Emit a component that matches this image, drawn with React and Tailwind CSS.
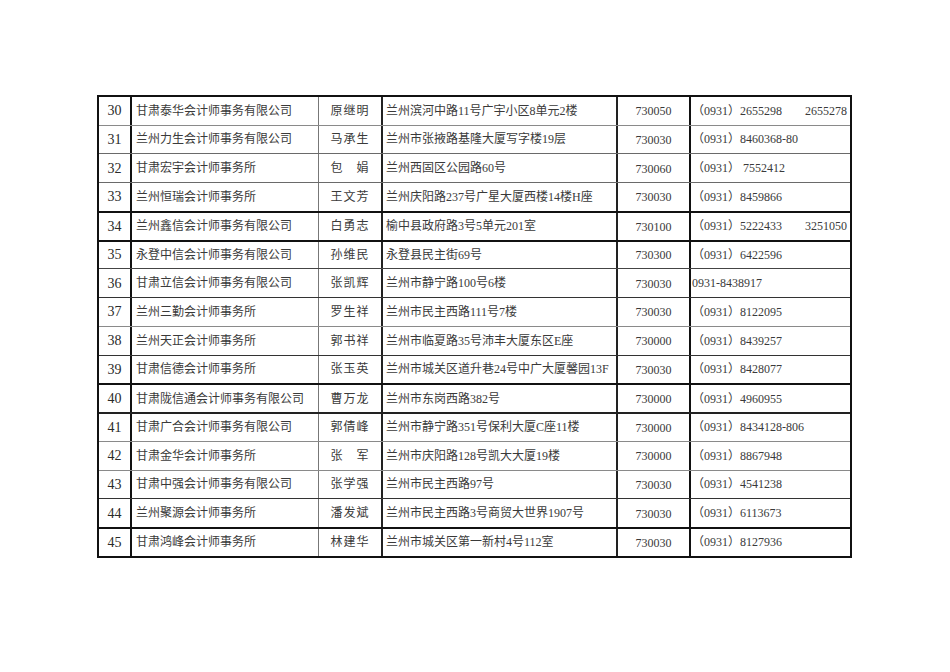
import React from "react";

const rows = [
  { n: "30", co: "甘肃泰华会计师事务有限公司", name: "原继明", addr: "兰州滨河中路11号广宇小区8单元2楼", pc: "730050", ph: "（0931）2655298", ph2: "2655278", b: "" },
  { n: "31", co: "兰州力生会计师事务有限公司", name: "马承生", addr: "兰州市张掖路基隆大厦写字楼19层", pc: "730030", ph: "（0931）8460368-80", b: "border-t border-[#8a8a8a]" },
  { n: "32", co: "甘肃宏宇会计师事务所", name: "包　娟", addr: "兰州西固区公园路60号", pc: "730060", ph: "（0931） 7552412", b: "border-t border-[#6a6a6a]" },
  { n: "33", co: "兰州恒瑞会计师事务所", name: "王文芳", addr: "兰州庆阳路237号广星大厦西楼14楼H座", pc: "730030", ph: "（0931）8459866", b: "border-t border-[#6a6a6a]" },
  { n: "34", co: "兰州鑫信会计师事务有限公司", name: "白勇志", addr: "榆中县政府路3号5单元201室", pc: "730100", ph: "（0931）5222433", ph2: "3251050", b: "border-t-2 border-[#111]" },
  { n: "35", co: "永登中信会计师事务有限公司", name: "孙维民", addr: "永登县民主街69号", pc: "730300", ph: "（0931）6422596", b: "border-t-2 border-[#111]" },
  { n: "36", co: "甘肃立信会计师事务有限公司", name: "张凯辉", addr: "兰州市静宁路100号6楼", pc: "730030", ph: "0931-8438917", b: "border-t border-[#444]" },
  { n: "37", co: "兰州三勤会计师事务所", name: "罗生祥", addr: "兰州市民主西路111号7楼", pc: "730030", ph: "（0931）8122095", b: "border-t border-[#333]" },
  { n: "38", co: "兰州天正会计师事务所", name: "郭书祥", addr: "兰州市临夏路35号沛丰大厦东区E座", pc: "730000", ph: "（0931）8439257", b: "border-t border-[#8a8a8a]" },
  { n: "39", co: "甘肃信德会计师事务所", name: "张玉英", addr: "兰州市城关区道升巷24号中广大厦馨园13F", pc: "730030", ph: "（0931）8428077", b: "border-t border-[#333]" },
  { n: "40", co: "甘肃陇信通会计师事务有限公司", name: "曹万龙", addr: "兰州市东岗西路382号", pc: "730000", ph: "（0931）4960955", b: "border-t-2 border-[#111]" },
  { n: "41", co: "甘肃广合会计师事务有限公司", name: "郭倩峰", addr: "兰州市静宁路351号保利大厦C座11楼", pc: "730000", ph: "（0931）8434128-806", b: "border-t-2 border-[#222]" },
  { n: "42", co: "甘肃金华会计师事务所", name: "张　军", addr: "兰州市庆阳路128号凯大大厦19楼", pc: "730000", ph: "（0931）8867948", b: "border-t border-[#8a8a8a]" },
  { n: "43", co: "甘肃中强会计师事务有限公司", name: "张学强", addr: "兰州市民主西路97号", pc: "730030", ph: "（0931）4541238", b: "border-t border-[#8a8a8a]" },
  { n: "44", co: "兰州聚源会计师事务所", name: "潘发斌", addr: "兰州市民主西路3号商贸大世界1907号", pc: "730030", ph: "（0931）6113673", b: "border-t border-[#333]" },
  { n: "45", co: "甘肃鸿峰会计师事务所", name: "林建华", addr: "兰州市城关区第一新村4号112室", pc: "730030", ph: "（0931）8127936", b: "border-t-2 border-[#111]" },
];

const font = { fontFamily: '"Liberation Serif", "Noto Sans CJK SC", serif' };

export default function App() {
  return (
    <div className="min-h-screen w-[950px] bg-white pt-[95px] pl-[97px]" style={font}>
      <div className="w-[755px] border-2 border-[#111] text-[12px] leading-none text-[#3a3a3a]">
        {rows.map((r, i) => (
          <div
            key={r.n}
            className={`flex ${i === 0 ? "h-[27.5px]" : "h-[28.75px]"} ${r.b}`}
          >
            <div className="flex w-[31px] shrink-0 items-center justify-center pt-[1px] text-[14px] text-[#2a2a2a]">
              {r.n}
            </div>
            <div className="flex w-[188px] shrink-0 items-center border-l-2 border-[#111] pl-[4px] whitespace-nowrap">
              {r.co}
            </div>
            <div className="flex w-[63px] shrink-0 items-center justify-center border-l border-[#777] tracking-[1px] whitespace-nowrap">
              {r.name}
            </div>
            <div className="flex w-[235px] shrink-0 items-center border-l-2 border-[#222] pl-[3px] whitespace-nowrap">
              {r.addr}
            </div>
            <div className="flex w-[73px] shrink-0 items-center justify-center border-l-2 border-[#222] pt-[1px]">
              {r.pc}
            </div>
            <div className="flex w-[161px] shrink-0 items-center justify-between border-l-2 border-[#111] pl-[1px] pr-[3px] whitespace-pre">
              <span>{r.ph}</span>
              {r.ph2 ? <span>{r.ph2}</span> : null}
            </div>
          </div>
        ))}
      </div>
    </div>
  );
}
